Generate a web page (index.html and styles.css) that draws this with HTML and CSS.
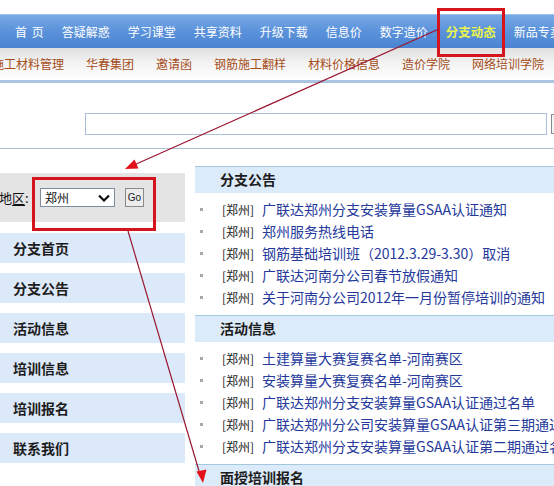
FILE: index.html
```html
<!DOCTYPE html>
<html lang="zh-CN">
<head>
<meta charset="utf-8">
<title>分支动态</title>
<link rel="stylesheet" href="styles.css">
</head>
<body>
<div class="page">
  <nav class="mainnav">
    <a class="home">首 页</a>
    <a>答疑解惑</a>
    <a>学习课堂</a>
    <a>共享资料</a>
    <a>升级下载</a>
    <a>信息价</a>
    <a>数字造价</a>
    <a class="active">分支动态</a>
    <a>新品专卖</a>
  </nav>
  <nav class="subnav">
    <a>施工材料管理</a>
    <a>华春集团</a>
    <a>邀请函</a>
    <a>钢筋施工翻样</a>
    <a>材料价格信息</a>
    <a>造价学院</a>
    <a>网络培训学院</a>
  </nav>
  <div class="searchbar">
    <div class="search-input"></div>
    <div class="search-btn"></div>
  </div>
  <div class="content">
    <aside class="side">
      <div class="region">
        <span class="region-label">地<u>区</u>:</span>
        <div class="select">
          <span>郑州</span>
          <svg class="chev" width="12" height="8" viewBox="0 0 12 8"><polyline points="1,1.5 6,6.5 11,1.5" fill="none" stroke="#111" stroke-width="2.2"/></svg>
        </div>
        <div class="go">Go</div>
      </div>
      <ul class="menu">
        <li>分支首页</li>
        <li>分支公告</li>
        <li>活动信息</li>
        <li>培训信息</li>
        <li>培训报名</li>
        <li>联系我们</li>
      </ul>
    </aside>
    <main class="main">
      <section class="block">
        <h2 class="block-title">分支公告</h2>
        <ul class="list">
          <li><span class="tag">[郑州]</span><a>广联达郑州分支安装算量GSAA认证通知</a></li>
          <li><span class="tag">[郑州]</span><a>郑州服务热线电话</a></li>
          <li><span class="tag">[郑州]</span><a>钢筋基础培训班（2012.3.29-3.30）取消</a></li>
          <li><span class="tag">[郑州]</span><a>广联达河南分公司春节放假通知</a></li>
          <li><span class="tag">[郑州]</span><a>关于河南分公司2012年一月份暂停培训的通知</a></li>
        </ul>
      </section>
      <section class="block">
        <h2 class="block-title">活动信息</h2>
        <ul class="list">
          <li><span class="tag">[郑州]</span><a>土建算量大赛复赛名单-河南赛区</a></li>
          <li><span class="tag">[郑州]</span><a>安装算量大赛复赛名单-河南赛区</a></li>
          <li><span class="tag">[郑州]</span><a>广联达郑州分支安装算量GSAA认证通过名单</a></li>
          <li><span class="tag">[郑州]</span><a>广联达郑州分公司安装算量GSAA认证第三期通过名单</a></li>
          <li><span class="tag">[郑州]</span><a>广联达郑州分支安装算量GSAA认证第二期通过名单</a></li>
        </ul>
      </section>
      <section class="block">
        <h2 class="block-title">面授培训报名</h2>
      </section>
    </main>
  </div>

  <div class="mark mark-nav"></div>
  <div class="mark mark-region"></div>
  <svg class="arrows" width="554" height="486" viewBox="0 0 554 486">
    <line x1="439" y1="29" x2="134" y2="165" stroke="#9a1830" stroke-width="1.2"/>
    <polygon points="125,169 138.5,168.5 134.5,159.5" fill="#e3101a"/>
    <line x1="128" y1="231" x2="199" y2="471" stroke="#9a1830" stroke-width="1.2"/>
    <polygon points="203,483 206.5,469.5 196.5,471.5" fill="#e3101a"/>
  </svg>
</div>
</body>
</html>
```
FILE: styles.css
```css
* {
  box-sizing: border-box;
  margin: 0;
  padding: 0;
}

html, body {
  margin: 0;
  background: #fff;
}

body {
  width: 554px;
  height: 486px;
  overflow: hidden;
  font-family: "Noto Sans CJK SC", "Liberation Sans", sans-serif;
}

.page {
  position: relative;
  width: 554px;
  height: 486px;
  overflow: hidden;
}

a {
  text-decoration: none;
  cursor: pointer;
}

/* main navigation */
.mainnav {
  margin-top: 14px;
  height: 34px;
  background: linear-gradient(#7aaae6 0%, #5c93db 45%, #4a84d2 100%);
  border-top: 1px solid #9cc0ec;
  display: flex;
  align-items: center;
  gap: 18px;
  padding-left: 15px;
  white-space: nowrap;
}

.mainnav a {
  color: #fff;
  font-size: 12px;
  line-height: 33px;
  flex: none;
}

.mainnav .home {
  word-spacing: 2px;
}

.mainnav .active {
  color: #eaf34c;
  font-weight: bold;
  font-size: 12.5px;
}

/* sub navigation */
.subnav {
  height: 35px;
  background: linear-gradient(#e0e0e0 0%, #f4f4f4 50%, #fff 100%);
  border-bottom: 3px solid #a9c5e2;
  display: flex;
  align-items: center;
  gap: 22px;
  margin-left: -8px;
  white-space: nowrap;
}

.subnav a {
  color: #a54c18;
  font-size: 12px;
  line-height: 32px;
  flex: none;
}

/* search */
.searchbar {
  height: 66px;
  border-bottom: 1px solid #a6c4d6;
  display: flex;
  align-items: flex-start;
  gap: 4px;
  padding-top: 30px;
  padding-left: 85px;
}

.search-input {
  width: 462px;
  height: 22px;
  border: 1px solid #a9c1d8;
  background: #fff;
  flex: none;
}

.search-btn {
  width: 20px;
  height: 20px;
  margin-top: 1px;
  border: 1px solid #888;
  background: #f4f4f4;
  flex: none;
}

/* content */
.content {
  display: grid;
  grid-template-columns: 185px 1fr;
  column-gap: 10px;
}

.side {
  padding-top: 24px;
}

.region {
  height: 49px;
  background: #e4e4e4;
  display: flex;
  align-items: flex-start;
  padding-top: 15px;
}

.region-label {
  font-size: 13px;
  line-height: 19px;
  color: #111;
  margin-left: -1px;
  width: 41px;
  flex: none;
}

.region-label u {
  text-decoration: underline;
  text-underline-offset: 2px;
}

.select {
  width: 75px;
  height: 19px;
  border: 1px solid #7f8c99;
  background: #fff;
  display: flex;
  align-items: center;
  justify-content: space-between;
  padding: 0 4px 0 4px;
  font-size: 12px;
  line-height: 17px;
  color: #111;
  flex: none;
}

.chev {
  display: block;
}

.go {
  width: 19px;
  height: 19px;
  margin-left: 10px;
  border: 1px solid #8a8a8a;
  background: #ececec;
  font-family: "Liberation Sans", sans-serif;
  font-size: 10px;
  line-height: 17px;
  text-align: center;
  color: #222;
  flex: none;
}

.menu {
  list-style: none;
  margin-top: 11px;
  display: flex;
  flex-direction: column;
  gap: 10px;
}

.menu li {
  height: 30px;
  background: #dce9fa;
  padding-left: 13px;
  font-size: 14px;
  font-weight: bold;
  line-height: 30px;
  color: #1c1c1c;
}

.main {
  padding-top: 17px;
  min-width: 0;
}

.block-title {
  height: 27px;
  border-top: 1px solid #a4c6df;
  background: #dcebfa;
  padding-left: 25px;
  font-size: 14px;
  font-weight: bold;
  line-height: 25px;
  color: #1c1c1c;
  white-space: nowrap;
}

.list {
  list-style: none;
  padding: 5px 0 7px 0;
}

.list li {
  height: 22px;
  display: flex;
  align-items: center;
  white-space: nowrap;
}

.list li::before {
  content: "";
  width: 3px;
  height: 3px;
  background: #a8a8a8;
  margin-left: 5px;
  margin-right: 19px;
  flex: none;
}

.tag {
  width: 40px;
  font-size: 12px;
  color: #222;
  flex: none;
}

.list a {
  font-size: 14px;
  color: #25399b;
  line-height: 22px;
}

/* annotation overlays */
.mark {
  position: absolute;
  border: 3px solid #d5141c;
  pointer-events: none;
}

.mark-nav {
  left: 437px;
  top: 8px;
  width: 68px;
  height: 49px;
}

.mark-region {
  left: 32px;
  top: 177px;
  width: 124px;
  height: 54px;
}

.arrows {
  position: absolute;
  left: 0;
  top: 0;
  pointer-events: none;
}
```
